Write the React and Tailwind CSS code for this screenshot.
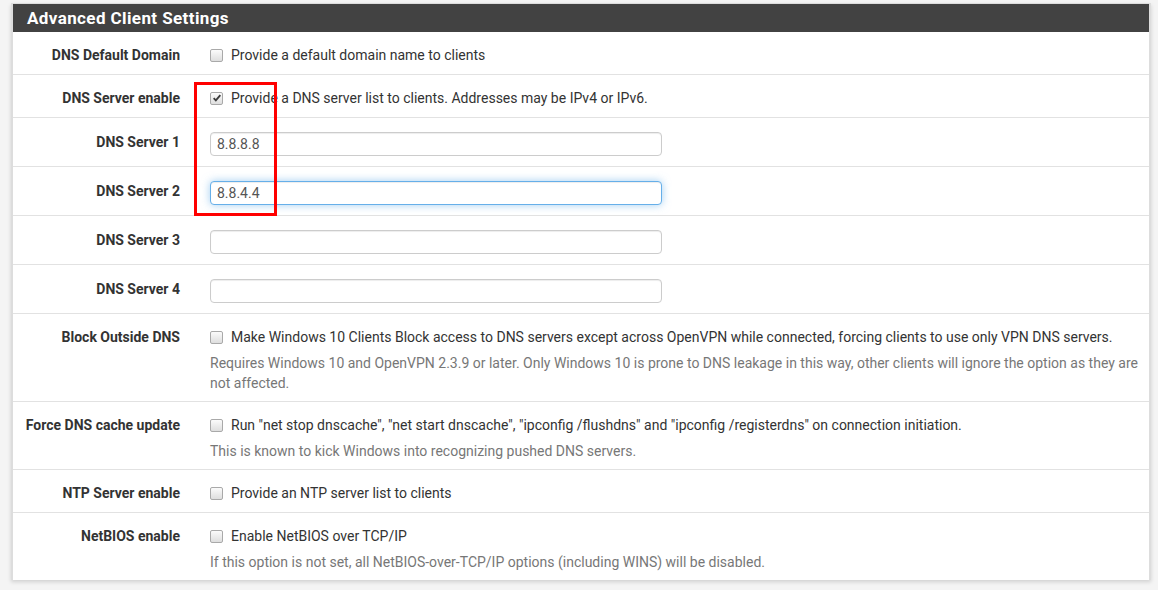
import React from "react";

const font = { fontFamily: "Roboto, 'Liberation Sans', sans-serif" };

const Check = ({ checked }) => (
  <span className="relative inline-block w-[13px] h-[13px] shrink-0 rounded-[2px] border border-[#a9a9a9] bg-gradient-to-b from-[#fbfbfb] to-[#dedede] mt-[4px]">
    {checked && (
      <svg viewBox="0 0 12 12" className="absolute left-[1px] top-[0px] w-[10px] h-[10px]">
        <path d="M2 6.2 L4.6 8.8 L10 2.6" fill="none" stroke="#3a3a3a" strokeWidth="2.2" />
      </svg>
    )}
  </span>
);

const Row = ({ label, children, last, pad = "pt-[13px] pb-[9px]" }) => (
  <div className={`flex ${pad} ${last ? "" : "border-b border-[#e2e2e2]"}`}>
    <div className="w-[167px] shrink-0 text-right font-bold text-[14px] leading-[20px] text-[#333]">{label}</div>
    <div className="ml-[30px] pr-[10px] flex-1 min-w-0">{children}</div>
  </div>
);

const CheckLine = ({ checked, text }) => (
  <div className="flex gap-[8px] text-[14px] leading-[20px] text-[#333]">
    <Check checked={checked} />
    <span>{text}</span>
  </div>
);

const Help = ({ children }) => (
  <div className="mt-[6px] text-[14px] leading-[20px] text-[#777]">{children}</div>
);

const Input = ({ value, focus }) => (
  <input
    readOnly
    value={value}
    className={`block w-[452px] h-[24px] rounded-[4px] px-[6px] text-[14px] text-[#555] bg-white outline-none border ${
      focus
        ? "border-[#66afe9] shadow-[inset_0_1px_1px_rgba(0,0,0,0.075),0_0_8px_rgba(102,175,233,0.6)]"
        : "border-[#ccc] shadow-[inset_0_1px_1px_rgba(0,0,0,0.075)]"
    }`}
    style={font}
  />
);

export default function App() {
  return (
    <div className="w-[1158px] h-[590px] bg-[#f4f4f4] pt-[3px] pl-[11px] overflow-hidden" style={font}>
      <div className="relative w-[1140px] bg-white border-x-2 border-t border-[#ddd] shadow-[0_2px_4px_rgba(0,0,0,0.15)]">
        <div className="h-[28px] bg-[#424242] flex items-center px-[14px] pt-[1px] text-white font-bold text-[17px] tracking-[0.4px]">
          Advanced Client Settings
        </div>
        <Row label="DNS Default Domain">
          <CheckLine text="Provide a default domain name to clients" />
        </Row>
        <Row label="DNS Server enable">
          <CheckLine checked text="Provide a DNS server list to clients. Addresses may be IPv4 or IPv6." />
        </Row>
        <Row label="DNS Server 1" pad="pt-[14px] pb-[10px]">
          <Input value="8.8.8.8" />
        </Row>
        <Row label="DNS Server 2" pad="pt-[14px] pb-[10px]">
          <Input value="8.8.4.4" focus />
        </Row>
        <Row label="DNS Server 3" pad="pt-[14px] pb-[10px]">
          <Input value="" />
        </Row>
        <Row label="DNS Server 4" pad="pt-[14px] pb-[10px]">
          <Input value="" />
        </Row>
        <Row label="Block Outside DNS" pad="pt-[13px] pb-[8px]">
          <CheckLine text="Make Windows 10 Clients Block access to DNS servers except across OpenVPN while connected, forcing clients to use only VPN DNS servers." />
          <Help>
            Requires Windows 10 and OpenVPN 2.3.9 or later. Only Windows 10 is prone to DNS leakage in this way, other clients will ignore the option as they are not affected.
          </Help>
        </Row>
        <Row label="Force DNS cache update" pad="pt-[13px] pb-[8px]">
          <CheckLine text={'Run "net stop dnscache", "net start dnscache", "ipconfig /flushdns" and "ipconfig /registerdns" on connection initiation.'} />
          <Help>This is known to kick Windows into recognizing pushed DNS servers.</Help>
        </Row>
        <Row label="NTP Server enable">
          <CheckLine text="Provide an NTP server list to clients" />
        </Row>
        <Row label="NetBIOS enable" last pad="pt-[13px] pb-[8px]">
          <CheckLine text="Enable NetBIOS over TCP/IP" />
          <Help>If this option is not set, all NetBIOS-over-TCP/IP options (including WINS) will be disabled.</Help>
        </Row>
        <div className="absolute left-[181px] top-[78px] w-[83px] h-[134px] border-[3px] border-[#ff0000] pointer-events-none" />
      </div>
    </div>
  );
}
